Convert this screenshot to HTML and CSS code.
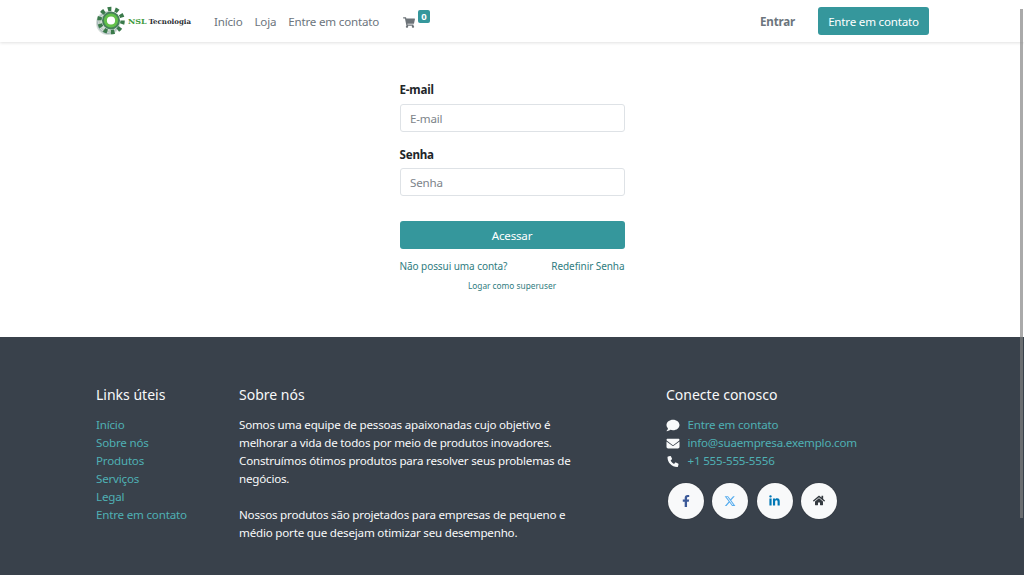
FILE: index.html
```html
<!DOCTYPE html>
<html lang="pt-BR">
<head>
<meta charset="utf-8">
<title>Acessar | NSL Tecnologia</title>
<link rel="stylesheet" href="styles.css">
</head>
<body>
<header class="topbar">
  <nav class="nav-inner">
    <a class="logo" href="#">
      <svg class="logo-mark" viewBox="0 0 32 36" width="32" height="36" aria-hidden="true">
        <circle cx="12" cy="20" r="12" fill="#d3dcd8"/>
        <circle cx="12" cy="20" r="10.4" fill="none" stroke="#8fa6a8" stroke-width=".8"/>
        <circle cx="12" cy="20" r="8.4" fill="none" stroke="#a5c2a8" stroke-width=".8"/>
        <circle cx="15" cy="17.5" r="11.6" fill="none" stroke="#3a7a4a" stroke-width="4.4" stroke-dasharray="3.6 3.7"/>
        <circle cx="15" cy="17.5" r="9" fill="#46805a"/>
        <circle cx="15" cy="17.5" r="5.6" fill="#fff" stroke="#62c04a" stroke-width="3"/>
      </svg>
      <span class="logo-nsl">NSL</span>
      <span class="logo-tec">Tecnologia</span>
    </a>
    <ul class="menu">
      <li><a href="#">Início</a></li>
      <li><a href="#">Loja</a></li>
      <li><a href="#">Entre em contato</a></li>
    </ul>
    <a class="cart" href="#">
      <svg viewBox="0 0 576 512" width="12" height="11" aria-hidden="true"><path fill="#6c7378" d="M528 301l47-208c4-15-8-29-23-29H159l-9-47C148 7 139 0 128 0H24C11 0 0 11 0 24v16c0 13 11 24 24 24h70l70 343c-17 10-28 28-28 49 0 31 25 56 56 56s56-25 56-56c0-16-6-30-17-40h210c-11 10-17 24-17 40 0 31 25 56 56 56s56-25 56-56c0-22-13-41-32-50l5-24c4-15-8-29-23-29H218l-7-32h293c11 0 21-8 24-19z"/></svg>
      <span class="badge">0</span>
    </a>
    <a class="signin" href="#">Entrar</a>
    <a class="btn-contact" href="#">Entre em contato</a>
  </nav>
</header>

<main class="login">
  <form class="login-form">
    <label class="field-label" for="email">E-mail</label>
    <input class="field-input" id="email" type="text" placeholder="E-mail">
    <label class="field-label field-label-second" for="senha">Senha</label>
    <input class="field-input" id="senha" type="password" placeholder="Senha">
    <button class="submit" type="button">Acessar</button>
    <div class="form-links">
      <a href="#">Não possui uma conta?</a>
      <a href="#">Redefinir Senha</a>
    </div>
    <a class="superuser" href="#">Logar como superuser</a>
  </form>
</main>

<footer class="footer">
  <div class="footer-grid">
    <section>
      <h5 class="footer-title">Links úteis</h5>
      <ul class="footer-links">
        <li><a href="#">Início</a></li>
        <li><a href="#">Sobre nós</a></li>
        <li><a href="#">Produtos</a></li>
        <li><a href="#">Serviços</a></li>
        <li><a href="#">Legal</a></li>
        <li><a href="#">Entre em contato</a></li>
      </ul>
    </section>
    <section class="about">
      <h5 class="footer-title">Sobre nós</h5>
      <p>Somos uma equipe de pessoas apaixonadas cujo objetivo é melhorar a vida de todos por meio de produtos inovadores. Construímos ótimos produtos para resolver seus problemas de negócios.</p>
      <p>Nossos produtos são projetados para empresas de pequeno e médio porte que desejam otimizar seu desempenho.</p>
    </section>
    <section>
      <h5 class="footer-title">Conecte conosco</h5>
      <ul class="contact-list">
        <li>
          <svg class="contact-icon" viewBox="0 0 512 512" width="14" height="13" aria-hidden="true"><path fill="#f8f9fa" d="M256 32C115 32 0 125 0 240c0 50 22 95 58 131-13 50-54 95-55 95-2 2-3 6-2 9s4 5 7 5c67 0 118-32 143-52 32 12 67 18 105 18 141 0 256-93 256-208S397 32 256 32z"/></svg>
          <a href="#">Entre em contato</a>
        </li>
        <li>
          <svg class="contact-icon" viewBox="0 0 512 512" width="14" height="13" aria-hidden="true"><path fill="#f8f9fa" d="M48 64C21 64 0 85 0 112c0 15 7 29 19 38l218 163c11 9 27 9 38 0l218-163c12-9 19-23 19-38 0-27-21-48-48-48H48zM0 176v208c0 35 29 64 64 64h384c35 0 64-29 64-64V176L294 339c-23 17-53 17-76 0L0 176z"/></svg>
          <a href="#">info@suaempresa.exemplo.com</a>
        </li>
        <li>
          <svg class="contact-icon" viewBox="0 0 512 512" width="14" height="11" aria-hidden="true"><path fill="#f8f9fa" d="M164 24c-8-19-28-29-48-24L28 24C11 29 0 44 0 62c0 247 200 450 450 450 18 0 33-12 38-29l24-88c5-20-5-40-24-48l-96-40c-16-7-35-2-46 12l-40 49c-70-33-127-90-160-160l49-40c14-11 18-30 12-46l-43-98z"/></svg>
          <a href="#">+1 555-555-5556</a>
        </li>
      </ul>
      <div class="socials">
        <a class="social" href="#" aria-label="Facebook">
          <svg viewBox="0 0 320 512" width="8" height="12" aria-hidden="true"><path fill="#3b5998" d="M279 288l14-93h-89v-60c0-25 12-50 52-50h41V6s-37-6-72-6c-73 0-121 44-121 125v70H23v93h81v224h100V288z"/></svg>
        </a>
        <a class="social" href="#" aria-label="X">
          <svg viewBox="0 0 512 512" width="12" height="12" aria-hidden="true"><path fill="#55acee" d="M389 48h71L306 224l181 240H345L234 319 107 464H36l165-188L27 48h146l100 133zm-25 374h39L151 88h-42z"/></svg>
        </a>
        <a class="social" href="#" aria-label="LinkedIn">
          <svg viewBox="0 0 448 512" width="11" height="12" aria-hidden="true"><path fill="#0077b5" d="M100 448H7V149h93zM53 108C24 108 0 83 0 54a54 54 0 0 1 107 0c0 29-24 54-54 54zm395 340h-93V302c0-35-1-79-48-79-49 0-56 38-56 77v148h-93V149h89v41h1c13-24 43-48 88-48 94 0 111 62 111 142z"/></svg>
        </a>
        <a class="social" href="#" aria-label="Site">
          <svg viewBox="0 0 576 512" width="12" height="11" aria-hidden="true"><path fill="#343a40" d="M280 148L96 300v164c0 9 7 16 16 16l112-1c9 0 16-7 16-16v-95c0-9 7-16 16-16h64c9 0 16 7 16 16v95c0 9 7 16 16 16l112 1c9 0 16-7 16-16V300L296 148c-5-4-11-4-16 0zm292 103l-84-69V44c0-7-5-12-12-12h-56c-7 0-12 5-12 12v73l-89-74c-18-14-43-14-61 0L4 251c-5 4-6 12-2 17l26 31c4 5 12 6 17 2L280 107c5-4 11-4 16 0l235 194c5 4 13 3 17-2l26-31c4-5 3-13-2-17z"/></svg>
        </a>
      </div>
    </section>
  </div>
</footer>
<div class="scroll-thumb"></div>
</body>
</html>
```

FILE: styles.css
```css
* { box-sizing: border-box; }
html, body { margin: 0; padding: 0; height: 575px; overflow: hidden; }
body {
  font-family: "Noto Sans", "Open Sans", sans-serif;
  font-size: 11.6px;
  letter-spacing: -0.2px;
  line-height: 18px;
  color: #212529;
  background: #fff;
}
a { text-decoration: none; }
ul { list-style: none; margin: 0; padding: 0; }

.topbar {
  height: 42px;
  background: #fff;
  box-shadow: 0 1px 3px rgba(0, 0, 0, .12);
  position: relative;
}
.nav-inner {
  margin: 0 95px 0 96px;
  height: 42px;
  display: flex;
  align-items: center;
}
.logo {
  display: flex;
  align-items: center;
  width: 118px;
  height: 36px;
  white-space: nowrap;
  letter-spacing: 0;
}
.logo-mark { flex: none; }
.logo-nsl {
  font: bold 8px "DejaVu Serif", serif;
  color: #3f9a40;
  margin-right: 2px;
}
.logo-tec {
  font: bold 7px "DejaVu Serif", serif;
  color: #2b2f33;
}
.menu { display: flex; gap: 12px; padding-top: 2px; }
.menu a { color: #6c757d; }
.cart {
  display: flex;
  margin-left: 24px;
  position: relative;
  align-items: center;
  height: 18px;
  margin-top: 2px;
}
.badge {
  position: absolute;
  left: 15px;
  top: -3px;
  min-width: 12px;
  height: 13px;
  border-radius: 2px;
  background: #35979c;
  color: #fff;
  font-size: 9.5px;
  font-weight: 700;
  letter-spacing: 0;
  line-height: 13px;
  text-align: center;
}
.signin {
  margin-left: auto;
  color: #6c757d;
  font-weight: 700;
  padding-top: 2px;
}
.btn-contact {
  margin-left: 23px;
  width: 111px;
  height: 28px;
  background: #35979c;
  color: #fff;
  border-radius: 3px;
  line-height: 30px;
  text-align: center;
}

.login {
  height: 295px;
  padding-top: 39px;
  display: flex;
  justify-content: center;
}
.login-form { width: 225px; display: flex; flex-direction: column; }
.field-label {
  font-weight: 700;
  color: #212529;
  line-height: 18px;
  margin-bottom: 5px;
}
.field-label-second { margin-top: 14px; margin-bottom: 4px; }
.field-input {
  height: 28px;
  border: 1px solid #dee2e6;
  border-radius: 3px;
  padding: 0 9.5px;
  font: 11.6px "Noto Sans", sans-serif;
  letter-spacing: -0.2px;
  color: #212529;
  background: #fff;
  width: 100%;
}
.field-input::placeholder { color: #7d848a; opacity: 1; }
.submit {
  margin-top: 25px;
  height: 28px;
  border: 0;
  border-radius: 3px;
  background: #35979c;
  color: #fff;
  font: 11.6px "Noto Sans", sans-serif;
  letter-spacing: -0.2px;
}
.form-links {
  margin-top: 8px;
  display: flex;
  justify-content: space-between;
  font-size: 10px;
  letter-spacing: -0.07px;
  line-height: 18px;
}
.form-links a, .superuser { color: #2f7c80; }
.superuser {
  font-size: 8.3px;
  letter-spacing: 0;
  line-height: 14px;
  margin-top: 4px;
  text-align: center;
}

.footer {
  height: 238px;
  background: #39414b;
  color: #f8f9fa;
  padding: 48px 96px 0;
}
.footer-grid {
  display: grid;
  grid-template-columns: 143px 427px 1fr;
}
.footer-title {
  margin: 0 0 11px;
  font-size: 14px;
  font-weight: 400;
  letter-spacing: 0;
  line-height: 20px;
  color: #f8f9fa;
}
.footer a { color: #4fb0b4; }
.about { padding-right: 90px; }
.about p { margin: 0 0 18px; line-height: 18px; }
.footer-links li, .contact-list li { line-height: 18px; }
.contact-list li { display: flex; align-items: center; }
.contact-icon { flex: none; margin-right: 7.5px; }
.socials { display: flex; gap: 8.3px; margin: 12.5px 0 0 2px; }
.social {
  width: 36px;
  height: 36px;
  border-radius: 50%;
  background: #f8f9fa;
  box-shadow: 0 0 1px rgba(0, 0, 0, .5);
  display: flex;
  align-items: center;
  justify-content: center;
}
.scroll-thumb {
  position: absolute;
  left: 1020px;
  top: 9px;
  width: 3px;
  height: 509px;
  background: rgba(130, 130, 130, .68);
}
```
